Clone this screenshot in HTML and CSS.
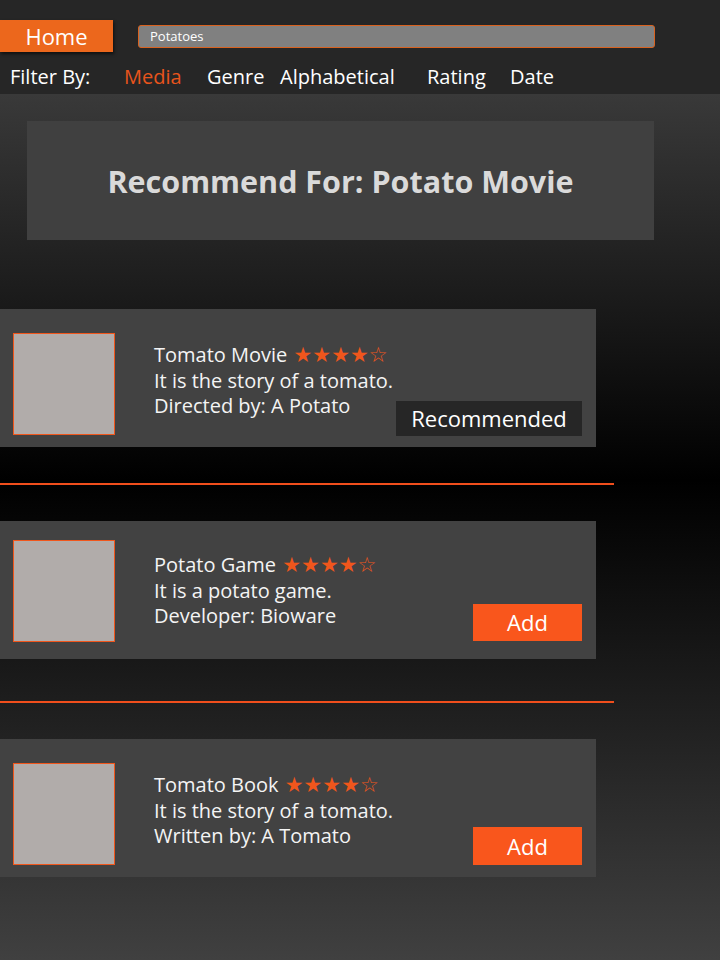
FILE: index.html
```html
<!DOCTYPE html>
<html lang="en">
<head>
<meta charset="utf-8">
<title>Recommendations</title>
<link rel="stylesheet" href="styles.css">
</head>
<body>
<header class="header">
  <div class="topbar">
    <button class="home-btn">Home</button>
    <div class="search">Potatoes</div>
  </div>
  <nav class="filters">
    <span class="filter-label">Filter By:</span>
    <span class="filter filter-media active">Media</span>
    <span class="filter filter-genre">Genre</span>
    <span class="filter filter-alpha">Alphabetical</span>
    <span class="filter filter-rating">Rating</span>
    <span class="filter filter-date">Date</span>
  </nav>
</header>
<main class="main">
  <section class="banner">
    <h1 class="banner-title">Recommend For: Potato Movie</h1>
  </section>

  <article class="card card-first">
    <div class="thumb"></div>
    <div class="info">
      <div class="title">Tomato Movie <span class="stars">★★★★☆</span></div>
      <div class="line">It is the story of a tomato.</div>
      <div class="line">Directed by: A Potato</div>
    </div>
    <div class="action action-rec"><span class="btn btn-rec">Recommended</span></div>
  </article>

  <hr class="divider">

  <article class="card card-second">
    <div class="thumb"></div>
    <div class="info">
      <div class="title">Potato Game <span class="stars">★★★★☆</span></div>
      <div class="line">It is a potato game.</div>
      <div class="line">Developer: Bioware</div>
    </div>
    <div class="action action-add2"><span class="btn btn-add">Add</span></div>
  </article>

  <hr class="divider divider-second">

  <article class="card">
    <div class="thumb"></div>
    <div class="info">
      <div class="title">Tomato Book <span class="stars">★★★★☆</span></div>
      <div class="line">It is the story of a tomato.</div>
      <div class="line">Written by: A Tomato</div>
    </div>
    <div class="action action-add3"><span class="btn btn-add btn-add3">Add</span></div>
  </article>
</main>
</body>
</html>
```

FILE: styles.css
```css
html, body {
  margin: 0;
  padding: 0;
}
body {
  width: 720px;
  min-height: 960px;
  font-family: "Open Sans", "Noto Sans", sans-serif;
  color: #ffffff;
  background: #262626;
}
.header {
  height: 94px;
  background: #262626;
  box-sizing: border-box;
  padding-top: 20px;
}
.topbar {
  display: flex;
  align-items: center;
}
.home-btn {
  width: 113px;
  height: 32px;
  border: none;
  margin: 0;
  padding: 0;
  background: #ec671c;
  color: #ffffff;
  font-family: inherit;
  font-size: 22px;
  line-height: 32px;
  box-shadow: 1px 2px 3px rgba(0,0,0,0.6);
}
.search {
  margin-left: 25px;
  width: 517px;
  height: 23px;
  box-sizing: border-box;
  border: 1px solid #d9621f;
  border-radius: 3px;
  background: #808080;
  color: #ffffff;
  font-size: 13px;
  line-height: 21px;
  padding-left: 11px;
}
.filters {
  display: flex;
  align-items: baseline;
  margin-top: 11px;
  font-size: 20px;
  line-height: 28px;
  padding-left: 10px;
}
.filter-label { width: 114px; }
.filter-media { width: 83px; }
.filter-genre { width: 73px; }
.filter-alpha { width: 147px; }
.filter-rating { width: 83px; }
.active { color: #e8541c; }

.main {
  min-height: 866px;
  background: linear-gradient(to bottom, #393939 0%, #000000 44.6%, #404040 100%);
  padding-top: 27px;
  box-sizing: border-box;
  overflow: hidden;
}
.banner {
  margin-left: 27px;
  width: 627px;
  height: 119px;
  background: #404040;
  display: flex;
  align-items: center;
  justify-content: center;
}
.banner-title {
  margin: 0;
  font-size: 30.5px;
  font-weight: 700;
  color: #dadada;
}
.card {
  width: 596px;
  height: 138px;
  background: #424242;
  display: flex;
  box-sizing: border-box;
  padding-left: 13px;
  margin-top: 36px;
}
.card-first { margin-top: 69px; }
.thumb {
  width: 102px;
  height: 102px;
  box-sizing: border-box;
  margin-top: 24px;
  background: #b1acaa;
  border: 1px solid #f0561c;
  flex-shrink: 0;
}
.card-second .thumb { margin-top: 19px; }
.info {
  margin-left: 39px;
  padding-top: 33px;
  font-size: 20px;
  line-height: 25px;
  color: #f4f4f4;
  flex: 1;
  white-space: nowrap;
}
.card-second .info { padding-top: 31px; }
.stars {
  font-family: "DejaVu Sans", sans-serif;
  color: #f0561c;
  font-size: 21px;
  margin-left: 1px;
}
.action {
  display: flex;
  align-items: flex-end;
  padding-right: 14px;
}
.action-rec { padding-bottom: 11px; }
.action-add2 { padding-bottom: 18px; }
.action-add3 { padding-bottom: 12px; }
.btn {
  display: block;
  color: #ffffff;
  font-size: 22px;
  text-align: center;
}
.btn-rec {
  width: 186px;
  height: 35px;
  line-height: 35px;
  background: #262626;
}
.btn-add {
  width: 109px;
  height: 37px;
  line-height: 37px;
  background: #f9561c;
}
.btn-add3 {
  height: 38px;
  line-height: 38px;
}
.divider {
  width: 614px;
  height: 2px;
  margin: 36px 0 0 0;
  border: none;
  background: #f04e1c;
}
.divider-second { margin-top: 42px; }
```
